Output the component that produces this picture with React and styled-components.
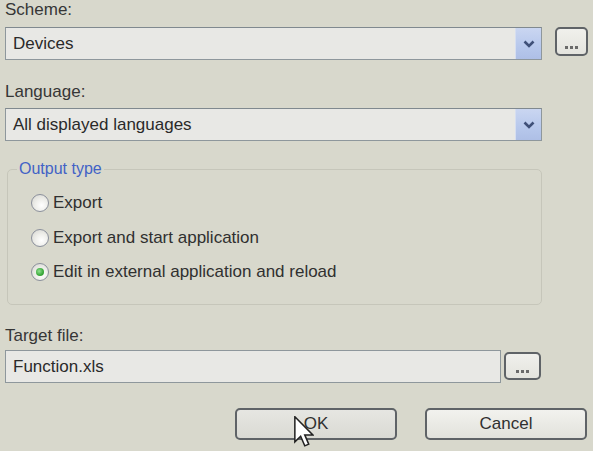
import React from "react";
import styled, { createGlobalStyle } from "styled-components";

const Global = createGlobalStyle`
  html, body {
    margin: 0;
    padding: 0;
    background: #d8d8cc;
    width: 593px;
    height: 451px;
    overflow: hidden;
  }
  * { box-sizing: border-box; }
`;

const Page = styled.div`
  display: flex;
  flex-direction: column;
  padding: 0 5px;
  font-family: "Liberation Sans", Arial, sans-serif;
  font-size: 17px;
  color: #303030;
`;

const FieldLabel = styled.div`
  height: 20px;
  line-height: 20px;
  margin-top: ${(p) => p.$top || 0}px;
  color: #363636;
`;

const Row = styled.div`
  display: flex;
  align-items: ${(p) => p.$align || "center"};
  gap: ${(p) => p.$gap || 0}px;
  margin-top: ${(p) => p.$top || 0}px;
`;

const Combo = styled.div`
  width: 537px;
  height: 33px;
  display: flex;
  border: 1px solid #8e979c;
  border-top-color: #80898f;
  background: #e8e8e5;
`;

const FieldText = styled.div`
  flex: 1;
  padding-left: 7px;
  line-height: 31px;
  color: #2a2a2a;
`;

const ComboArrow = styled.div`
  width: 26px;
  display: flex;
  align-items: center;
  justify-content: center;
  background: linear-gradient(180deg, #cad6f1 0%, #b7c8ec 60%, #aebfe6 100%);
  border-left: 1px solid #d6def0;
`;

const EllipsisButton = styled.div`
  width: ${(p) => p.$w || 33}px;
  height: ${(p) => p.$h || 29}px;
  border: 2px solid #5f6367;
  border-radius: 5px;
  background: linear-gradient(180deg, #f0f0ec 0%, #e4e4de 100%);
  display: flex;
  align-items: flex-end;
  justify-content: center;
  padding-bottom: 5px;
  gap: 2px;
`;

const Dot = styled.span`
  width: 3px;
  height: 3px;
  background: #6a6a6a;
`;

const Group = styled.fieldset`
  margin: 20px 0 0 2px;
  width: 535px;
  border: 1px solid #c6c6ba;
  border-radius: 5px;
  padding: 9px 0 14px 23px;
  display: flex;
  flex-direction: column;
`;

const Legend = styled.legend`
  margin-left: -14px;
  padding: 0 2px;
  font-size: 16px;
  line-height: 16px;
  color: #4262c6;
`;

const RadioRow = styled.label`
  height: 34.5px;
  display: flex;
  align-items: center;
  gap: 4px;
  color: #303030;
`;

const RadioCircle = styled.span`
  width: 18px;
  height: 18px;
  border-radius: 50%;
  border: 1px solid #8b909c;
  background: radial-gradient(circle at 60% 65%, #ffffff 0%, #eeeeea 45%, #d4d4ce 100%);
  display: flex;
  align-items: center;
  justify-content: center;
`;

const RadioDot = styled.span`
  width: 8px;
  height: 8px;
  border-radius: 50%;
  background: radial-gradient(circle at 40% 40%, #8fe08f 0%, #3aa83a 60%, #2a8a2a 100%);
`;

const TextBox = styled.div`
  width: 496px;
  height: 33px;
  border: 1px solid #8e979c;
  background: #e8e8e5;
  display: flex;
`;

const ButtonRow = styled.div`
  display: flex;
  justify-content: flex-end;
  gap: 28px;
  margin-top: 25px;
  margin-right: 1px;
`;

const DialogButton = styled.div`
  position: relative;
  width: 162px;
  height: 32px;
  border: 2px solid #5f6367;
  border-radius: 5px;
  background: ${(p) =>
    p.$default
      ? "linear-gradient(180deg, #e6e6e2 0%, #dadad4 100%)"
      : "linear-gradient(180deg, #f2f2ee 0%, #e2e2dc 100%)"};
  display: flex;
  align-items: center;
  justify-content: center;
  color: #303030;
  font-size: 17px;
`;

const Cursor = styled.svg`
  position: absolute;
  left: 57px;
  top: 6px;
`;

const Chevron = () => (
  <svg width="12" height="8" viewBox="0 0 12 8">
    <path d="M1.5 1.5 L6 6 L10.5 1.5" fill="none" stroke="#3f5078" strokeWidth="2.6" strokeLinejoin="miter" />
  </svg>
);

const Dots = ({ w, h }) => (
  <EllipsisButton $w={w} $h={h}>
    <Dot />
    <Dot />
    <Dot />
  </EllipsisButton>
);

const Radio = ({ checked, children }) => (
  <RadioRow>
    <RadioCircle>{checked && <RadioDot />}</RadioCircle>
    {children}
  </RadioRow>
);

export default function App() {
  return (
    <Page>
      <Global />
      <FieldLabel>Scheme:</FieldLabel>
      <Row $top={7} $gap={13} $align="flex-start">
        <Combo>
          <FieldText>Devices</FieldText>
          <ComboArrow>
            <Chevron />
          </ComboArrow>
        </Combo>
        <Dots w={33} h={29} />
      </Row>
      <FieldLabel $top={22}>Language:</FieldLabel>
      <Row $top={6}>
        <Combo>
          <FieldText>All displayed languages</FieldText>
          <ComboArrow>
            <Chevron />
          </ComboArrow>
        </Combo>
      </Row>
      <Group>
        <Legend>Output type</Legend>
        <Radio>Export</Radio>
        <Radio>Export and start application</Radio>
        <Radio checked>Edit in external application and reload</Radio>
      </Group>
      <FieldLabel $top={21}>Target file:</FieldLabel>
      <Row $top={4} $gap={3}>
        <TextBox>
          <FieldText>Function.xls</FieldText>
        </TextBox>
        <Dots w={37} h={28} />
      </Row>
      <ButtonRow>
        <DialogButton $default>
          OK
          <Cursor width="20" height="32" viewBox="0 0 13 21">
            <path
              d="M0.5 0.5 L0.5 17 L4.3 13.3 L7 19.6 L9.6 18.5 L7 12.4 L12.3 12.4 Z"
              fill="#ffffff"
              stroke="#222"
              strokeWidth="1"
              strokeLinejoin="miter"
            />
          </Cursor>
        </DialogButton>
        <DialogButton>Cancel</DialogButton>
      </ButtonRow>
    </Page>
  );
}
